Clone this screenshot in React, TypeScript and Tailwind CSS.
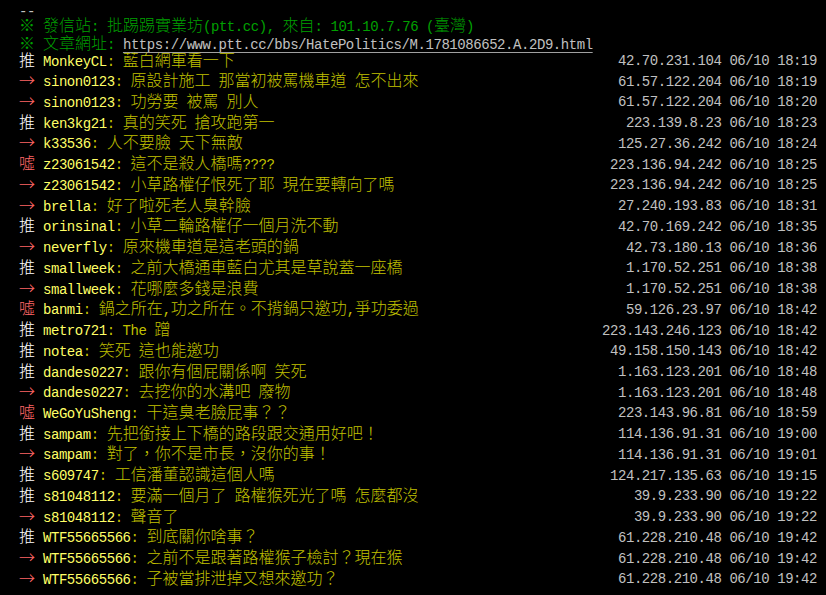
import React from "react";

type Push = [string, string, string, string];

const pushes: Push[] = [
  ["推", "MonkeyCL", "藍白網軍看一下", "42.70.231.104 06/10 18:19"],
  ["→", "sinon0123", "原設計施工 那當初被罵機車道 怎不出來", "61.57.122.204 06/10 18:19"],
  ["→", "sinon0123", "功勞要 被罵 別人", "61.57.122.204 06/10 18:20"],
  ["推", "ken3kg21", "真的笑死 搶攻跑第一", "223.139.8.23 06/10 18:23"],
  ["→", "k33536", "人不要臉 天下無敵", "125.27.36.242 06/10 18:24"],
  ["噓", "z23061542", "這不是殺人橋嗎????", "223.136.94.242 06/10 18:25"],
  ["→", "z23061542", "小草路權仔恨死了耶 現在要轉向了嗎", "223.136.94.242 06/10 18:25"],
  ["→", "brella", "好了啦死老人臭幹臉", "27.240.193.83 06/10 18:31"],
  ["推", "orinsinal", "小草二輪路權仔一個月洗不動", "42.70.169.242 06/10 18:35"],
  ["→", "neverfly", "原來機車道是這老頭的鍋", "42.73.180.13 06/10 18:36"],
  ["推", "smallweek", "之前大橋通車藍白尤其是草說蓋一座橋", "1.170.52.251 06/10 18:38"],
  ["→", "smallweek", "花哪麼多錢是浪費", "1.170.52.251 06/10 18:38"],
  ["噓", "banmi", "鍋之所在,功之所在。不揹鍋只邀功,爭功委過", "59.126.23.97 06/10 18:42"],
  ["推", "metro721", "The 蹭", "223.143.246.123 06/10 18:42"],
  ["推", "notea", "笑死 這也能邀功", "49.158.150.143 06/10 18:42"],
  ["推", "dandes0227", "跟你有個屁關係啊 笑死", "1.163.123.201 06/10 18:48"],
  ["→", "dandes0227", "去挖你的水溝吧 廢物", "1.163.123.201 06/10 18:48"],
  ["噓", "WeGoYuSheng", "干這臭老臉屁事？？", "223.143.96.81 06/10 18:59"],
  ["推", "sampam", "先把銜接上下橋的路段跟交通用好吧！", "114.136.91.31 06/10 19:00"],
  ["→", "sampam", "對了，你不是市長，沒你的事！", "114.136.91.31 06/10 19:01"],
  ["推", "s609747", "工信潘董認識這個人嗎", "124.217.135.63 06/10 19:15"],
  ["推", "s81048112", "要滿一個月了 路權猴死光了嗎 怎麼都沒", "39.9.233.90 06/10 19:22"],
  ["→", "s81048112", "聲音了", "39.9.233.90 06/10 19:22"],
  ["推", "WTF55665566", "到底關你啥事？", "61.228.210.48 06/10 19:42"],
  ["→", "WTF55665566", "之前不是跟著路權猴子檢討？現在猴", "61.228.210.48 06/10 19:42"],
  ["→", "WTF55665566", "子被當排泄掉又想來邀功？", "61.228.210.48 06/10 19:42"],
];

// split a line into half-width / full-width runs so CJK takes two columns
function runs(s: string) {
  const out: { wide: boolean; text: string }[] = [];
  for (const ch of s) {
    const wide = ch.charCodeAt(0) >= 0x2000;
    const last = out[out.length - 1];
    if (last && last.wide === wide) last.text += ch;
    else out.push({ wide, text: ch });
  }
  return out;
}

function T({ s }: { s: string }) {
  return (
    <>
      {runs(s).map((r, i) =>
        r.wide ? (
          <span
            key={i}
            className="inline-block font-['Noto_Sans_CJK_TC',sans-serif] font-light text-[16px] leading-[17px] tracking-[0px]"
          >
            {r.text}
          </span>
        ) : (
          <span key={i}>{r.text}</span>
        )
      )}
    </>
  );
}

export default function App() {
  return (
    <div className="w-[826px] h-[595px] overflow-hidden bg-black font-['Liberation_Mono','Noto_Sans_CJK_TC',monospace] text-[14px] tracking-[-0.44px] whitespace-pre">
      <div className="h-[16px] pt-[8px] pl-[19px] leading-[8px] text-[#c0c0c0]">--</div>
      <div className="h-[18px] pl-[19px] leading-[18px] text-[#00a000]">
        <T s="※ 發信站: 批踢踢實業坊(ptt.cc), 來自: 101.10.7.76 (臺灣)" />
      </div>
      <div className="h-[17px] pl-[19px] leading-[18px] text-[#00a000]">
        <T s="※ 文章網址: " />
        <span className="text-[#c0c0c0] underline decoration-[#a0a0a0] underline-offset-[3px]">
          https://www.ptt.cc/bbs/HatePolitics/M.1781086652.A.2D9.html
        </span>
      </div>
      {pushes.map(([tag, id, msg, ip], i) => (
        <div key={i} className="flex h-[20.74px] items-center justify-between pl-[19px] pr-[9px] leading-[20.74px]">
          <div>
            <span className={tag === "推" ? "text-white" : "text-[#ff6666]"}>
              <T s={tag} />
            </span>
            <span> </span>
            <span className="text-[#ffff66]">{id}</span>
            <span className="text-[#c0c000]">
              <T s={": " + msg} />
            </span>
          </div>
          <div className="text-[#c0c0c0]">{ip}</div>
        </div>
      ))}
    </div>
  );
}
